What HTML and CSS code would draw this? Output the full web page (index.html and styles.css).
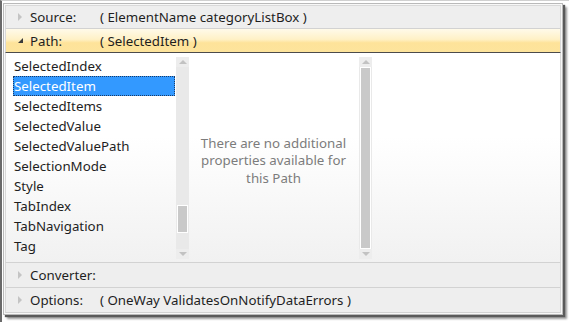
FILE: index.html
```html
<!DOCTYPE html>
<html lang="en">
<head>
    <meta charset="UTF-8">
    <title>Binding Path Editor</title>
    <link rel="stylesheet" href="styles.css">
</head>
<body>
    <div class="panel">
        <div class="row">
            <span class="arrow closed"></span>
            <span class="label">Source:</span>
            <span class="value">( ElementName categoryListBox )</span>
        </div>
        <div class="row open">
            <span class="arrow expanded"></span>
            <span class="label">Path:</span>
            <span class="value">( SelectedItem )</span>
        </div>

        <div class="main">
            <ul class="list">
                <li>SelectedIndex</li>
                <li class="selected">SelectedItem</li>
                <li>SelectedItems</li>
                <li>SelectedValue</li>
                <li>SelectedValuePath</li>
                <li>SelectionMode</li>
                <li>Style</li>
                <li>TabIndex</li>
                <li>TabNavigation</li>
                <li>Tag</li>
            </ul>
            <div class="scrollbar">
                <span class="btn up"></span>
                <div class="track">
                    <div class="thumb small"></div>
                </div>
                <span class="btn down"></span>
            </div>
            <div class="message">There are no additional properties available for this Path</div>
            <div class="scrollbar">
                <span class="btn up"></span>
                <div class="track">
                    <div class="thumb full"></div>
                </div>
                <span class="btn down"></span>
            </div>
        </div>

        <div class="row converter">
            <span class="arrow closed"></span>
            <span class="label">Converter:</span>
        </div>
        <div class="row options">
            <span class="arrow closed"></span>
            <span class="label">Options:</span>
            <span class="value">( OneWay ValidatesOnNotifyDataErrors )</span>
        </div>
    </div>
</body>
</html>
```

FILE: styles.css
```css
* {
    box-sizing: border-box;
}
body {
    margin: 0;
    padding: 2px 0 0 1px;
    background: #fff;
    font-family: "Noto Sans", "Open Sans", sans-serif;
    font-size: 13.3px;
    color: #1e1e1e;
    border-left: 2px solid #6a6a6a;
    border-top: 1px solid #d0d0d0;
    height: 322px;
}
.panel {
    width: 560px;
    height: 312px;
    border: 1px solid #b9b9b9;
    padding: 1px;
    background: #f7f7f7;
    box-shadow: 2px 2px 1px #5a5a5a, 4px 4px 2px #9a9a9a;
    display: flex;
    flex-direction: column;
}
.row {
    height: 23px;
    display: flex;
    align-items: center;
    background: #eeeeee;
    border: 1px solid #d9d9d9;
    border-bottom: none;
    flex-shrink: 0;
}
.row.open {
    height: 25px;
    background: linear-gradient(#fffaea, #fff1c6 45%, #fee39a 60%, #fde49c);
    border-top-color: #d2d2d2;
    border-bottom: 1px solid #4b4b4b;
}
.row.converter {
    height: 25px;
    border-top-color: #d2d2d2;
}
.row.options {
    height: 26px;
    border-top-color: #d2d2d2;
    border-bottom: 1px solid #d2d2d2;
}
.arrow {
    width: 0;
    height: 0;
    margin: 0 8px 0 12px;
}
.arrow.closed {
    border-top: 4px solid transparent;
    border-bottom: 4px solid transparent;
    border-left: 4px solid #c4c4c4;
}
.arrow.expanded {
    border-left: 5px solid transparent;
    border-bottom: 5px solid #3a3a3a;
    margin-right: 7px;
}
.label {
    width: 70px;
}
.value {
    white-space: nowrap;
}
.main {
    height: 209px;
    flex-shrink: 0;
    display: flex;
    padding: 3px 0 0 7px;
    border-left: 1px solid #d9d9d9;
    border-right: 1px solid #d9d9d9;
    background: linear-gradient(#fff 40%, #f1f1f1);
}
.list {
    list-style: none;
    margin: 0;
    padding: 0;
    width: 162px;
}
.list li {
    height: 20px;
    line-height: 20px;
    padding-left: 1px;
    white-space: nowrap;
}
.list li.selected {
    background: #3399ff;
    color: #fff;
    outline: 1px dotted #1a3a66;
    outline-offset: -1px;
}
.scrollbar {
    width: 13px;
    margin: 1px 0 3px 1px;
    display: flex;
    flex-direction: column;
    background: #ededed;
}
.btn {
    height: 10px;
    display: flex;
    justify-content: center;
    align-items: center;
}
.btn::after {
    content: "";
    border-left: 4px solid transparent;
    border-right: 4px solid transparent;
}
.btn.up::after {
    border-bottom: 4px solid #c2c2c2;
}
.btn.down::after {
    border-top: 4px solid #c2c2c2;
}
.track {
    flex: 1;
    display: flex;
    flex-direction: column;
    justify-content: flex-end;
    padding: 0 1px;
    background: #e9e9e9;
}
.thumb {
    background: #c9c9c9;
    border: 1px solid #fff;
}
.thumb.small {
    height: 28px;
    margin-bottom: 16px;
}
.thumb.full {
    flex: 1;
}
.message {
    width: 169px;
    align-self: center;
    text-align: center;
    color: #7c7c7c;
    line-height: 17.5px;
    padding: 0 10px;
    margin-top: 4px;
}
```
